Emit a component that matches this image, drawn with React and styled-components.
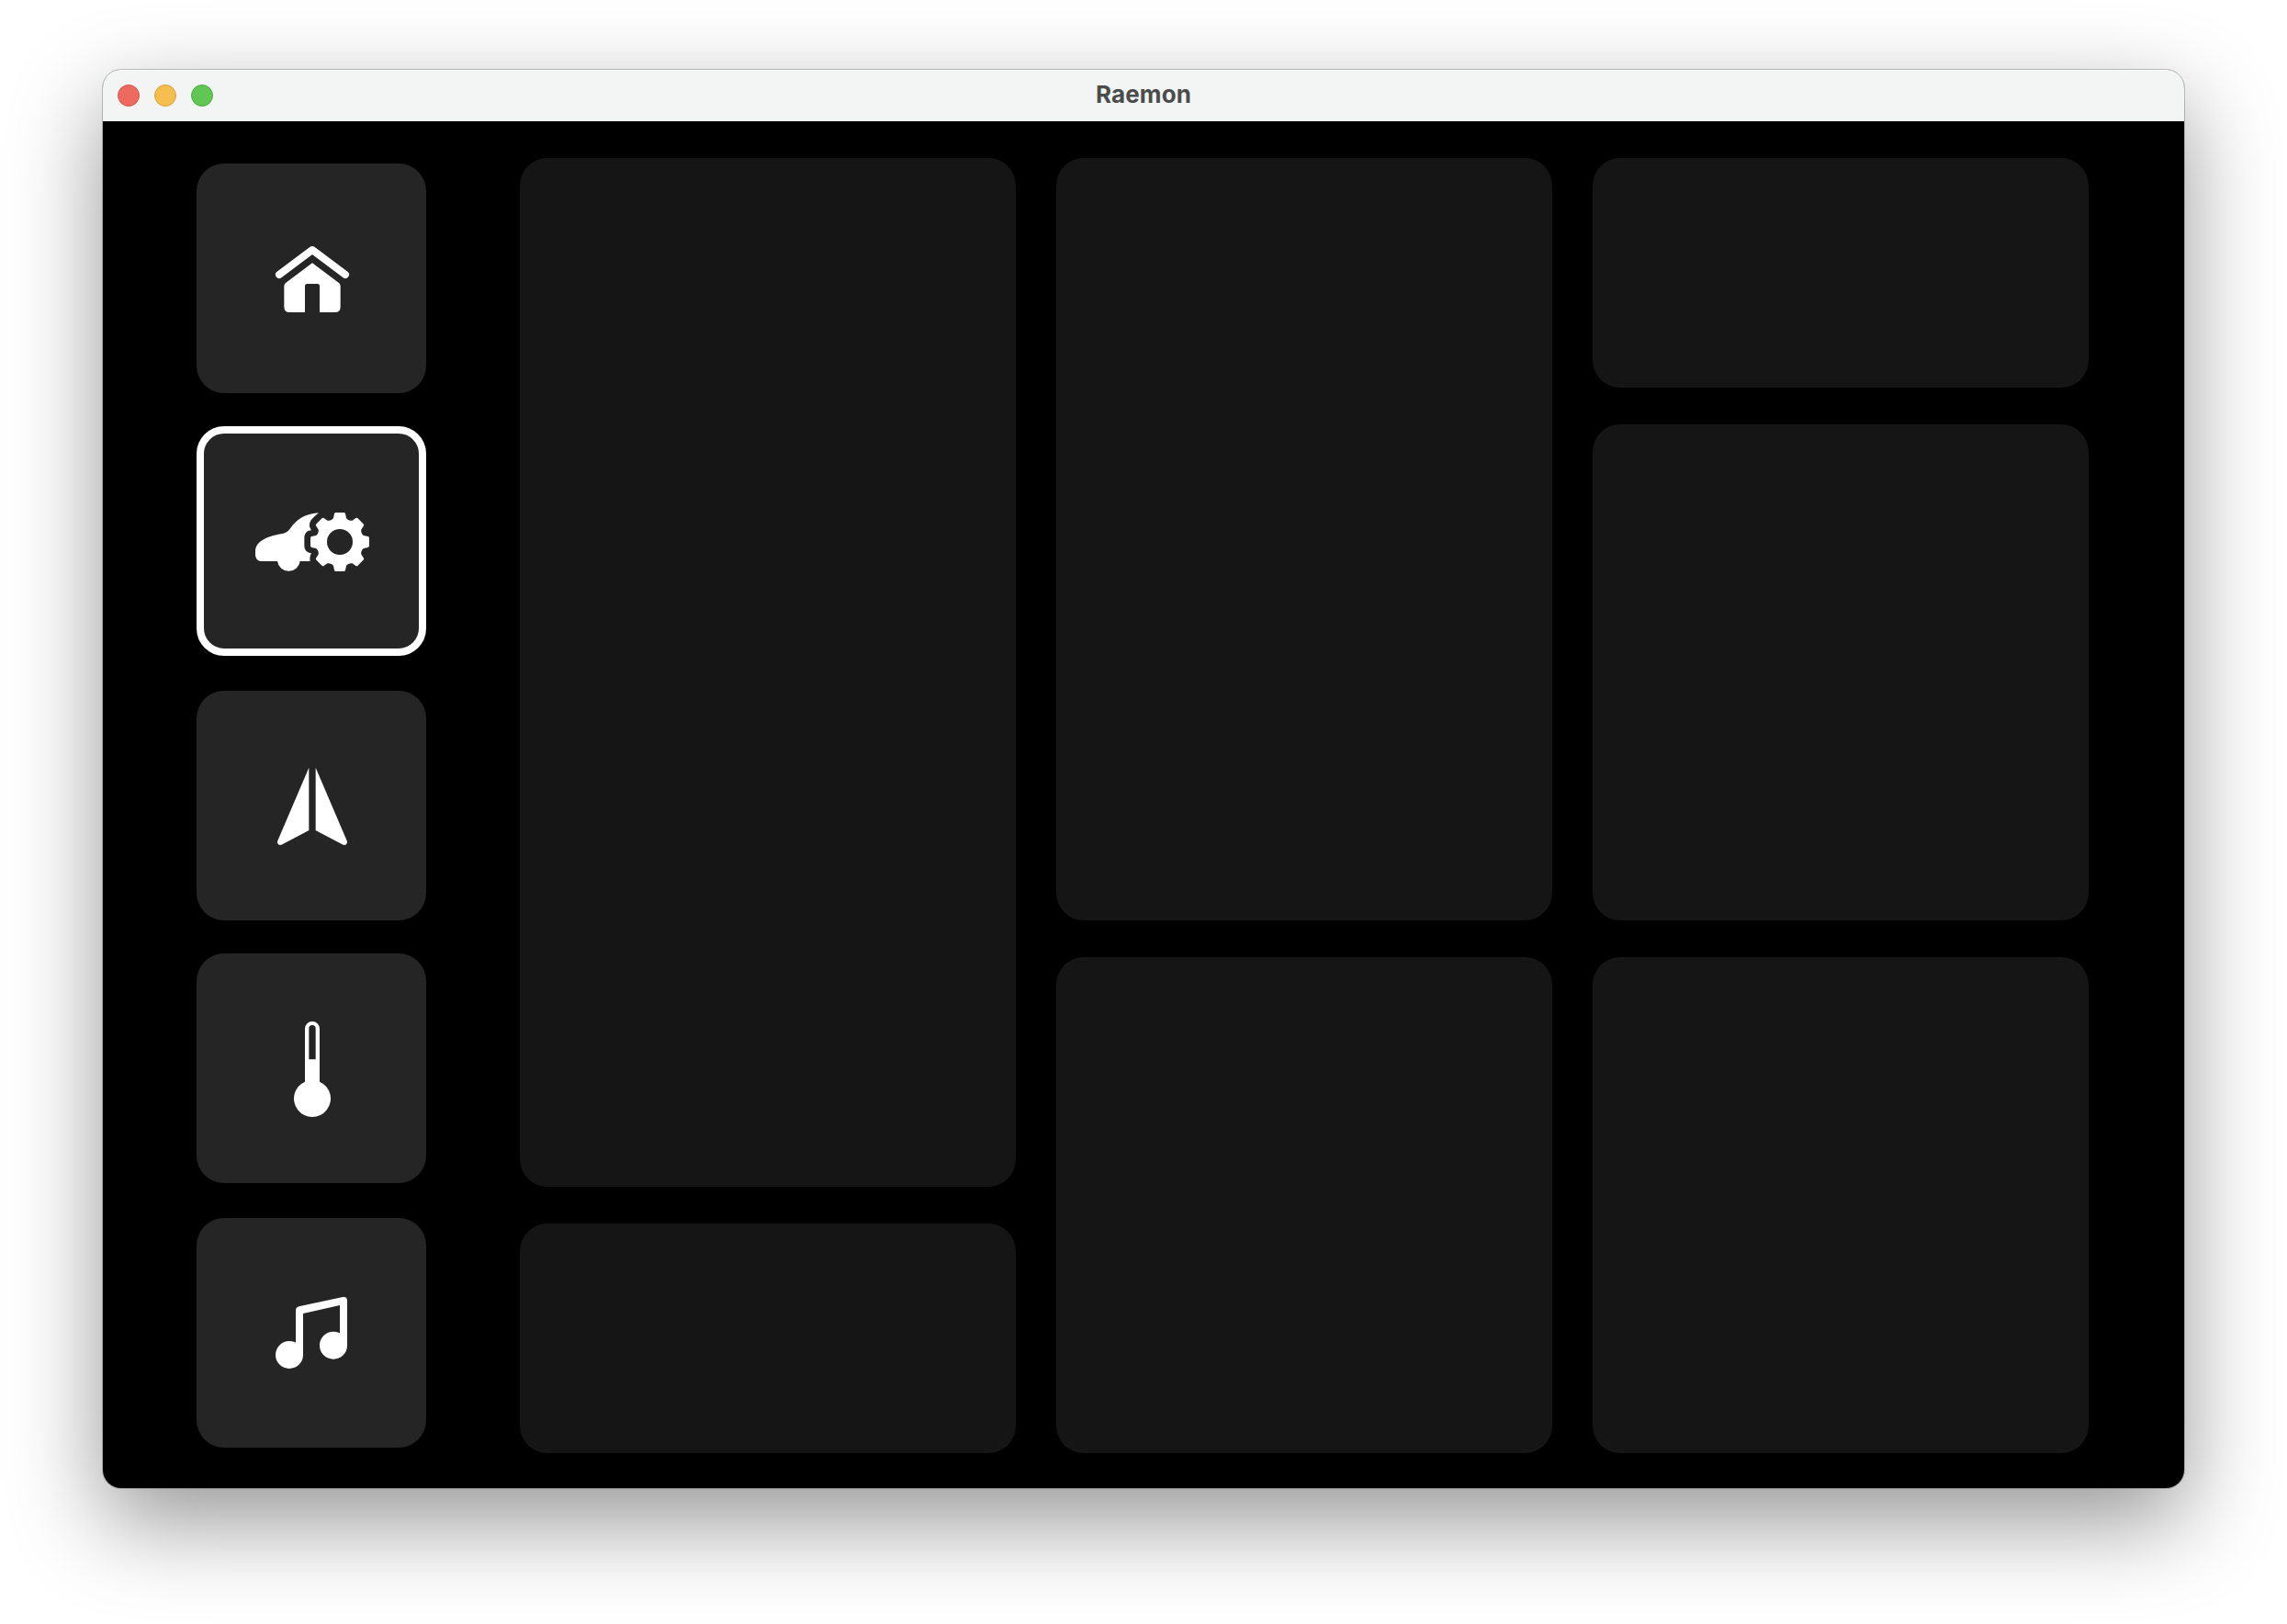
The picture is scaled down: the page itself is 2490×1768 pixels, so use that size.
import React from "react";
import styled, { createGlobalStyle } from "styled-components";

const GlobalStyle = createGlobalStyle`
  * { box-sizing: border-box; }
  body { margin: 0; background: #fff; }
`;

const Desktop = styled.div`
  display: flex;
  width: 2490px;
  height: 1768px;
  padding: 76px 112px 148px;
  background: #fff;
  overflow: hidden;
`;

const Window = styled.div`
  display: flex;
  flex-direction: column;
  flex: 1;
  border-radius: 20px;
  background: #000;
  box-shadow: 0 0 0 1px rgba(0, 0, 0, 0.22), 0 36px 100px rgba(0, 0, 0, 0.42);
`;

const TitleBar = styled.header`
  display: grid;
  grid-template-columns: 1fr auto 1fr;
  align-items: center;
  height: 56px;
  padding: 0 16px;
  border-radius: 20px 20px 0 0;
  background: #f3f5f4;
  box-shadow: inset 0 1px 0 #fbfcfb;
`;

const Controls = styled.div`
  display: flex;
  gap: 16px;
`;

const Control = styled.span`
  width: 24px;
  height: 24px;
  border-radius: 50%;
  background: ${(p) => p.$fill};
  border: 1px solid ${(p) => p.$edge};
`;

const Title = styled.h1`
  margin: 0;
  padding-bottom: 2px;
  font: 700 26px/32px Inter, "Liberation Sans", sans-serif;
  letter-spacing: 0.1px;
  color: #4a4d4b;
`;

const Content = styled.main`
  display: flex;
  flex: 1;
  gap: 102px;
  padding: 40px 104px 38px 102px;
`;

const Sidebar = styled.nav`
  display: grid;
  grid-template-rows: 286px 288px 286px 288px 250px;
  width: 250px;
  padding-top: 6px;
`;

const NavButton = styled.button`
  display: flex;
  align-items: center;
  justify-content: center;
  width: 250px;
  height: 250px;
  padding: 0;
  border: ${(p) => (p.$selected ? "8px solid #fff" : "0")};
  border-radius: 30px;
  background: #252525;
`;

const Icon = styled.svg`
  display: block;
  width: ${(p) => p.$width}px;
  height: 120px;
  fill: #fff;
`;

const Dashboard = styled.section`
  display: flex;
  flex: 1;
  gap: 44px;
`;

const Column = styled.div`
  display: flex;
  flex-direction: column;
  flex: 1;
  gap: 40px;
`;

const Panel = styled.article`
  height: ${(p) => p.$height}px;
  border-radius: 30px;
  background: #151515;
`;

function gearPath(cx, cy) {
  const steps = [
    ["Q", [-23, 73.8], [-21, 78]],
    ["L", [-18, 92]],
    ["Q", [-17, 96], [-13, 96]],
    ["L", [13, 96]],
    ["Q", [17, 96], [18, 92]],
    ["L", [21, 78]],
    ["Q", [23, 73.8], [29.5, 71.1]],
  ];
  const place = ([u, v], a) =>
    `${(cx + u * Math.cos(a) + v * Math.sin(a)).toFixed(2)} ${(cy + u * Math.sin(a) - v * Math.cos(a)).toFixed(2)}`;
  let d = `M${place([-29.5, 71.1], 0)}`;
  for (let i = 0; i < 8; i++) {
    const a = (i * Math.PI) / 4;
    steps.forEach(([cmd, ...pts]) => {
      d += cmd + pts.map((p) => place(p, a)).join(" ");
    });
  }
  return `${d}ZM${cx - 42} ${cy}a42 42 0 1 0 84 0a42 42 0 1 0 -84 0Z`;
}

const HomeIcon = () => (
  <Icon $width={120} viewBox="-3 -21 360 360">
    <path d="M72 147L180 66L288 147" fill="none" stroke="#fff" strokeWidth="24" strokeLinecap="round" strokeLinejoin="round" />
    <path d="M180 109L267 174Q272 178 272 185V252Q272 270 254 270H204V184Q204 177 197 177H163Q156 177 156 184V270H106Q88 270 88 252V185Q88 178 93 174Z" />
  </Icon>
);

const CarSettingsIcon = () => (
  <Icon $width={150} viewBox="0 -33 450 360">
    <path d="M249 55C215 57 187 69 168 91C155 106 150 119 134 122C88 129 42 145 42 181V190C42 205 50 213 61 213H114A37.3 37.3 0 0 0 188 213H221Q218 198 225 187C212 186 202 177 202 162V137C202 122 212 112 225 112Q215 98 221 84C226 75 237 65 249 55Z" />
    <path fillRule="evenodd" d={gearPath(318, 150)} />
  </Icon>
);

const NavigationIcon = () => (
  <Icon $width={120} viewBox="-3 -9 360 360">
    <path d="M169 47V252L82 298Q75 302 69 298Q63 293 67 286Z" />
    <path d="M191 47V252L278 298Q285 302 291 298Q297 293 293 286Z" />
  </Icon>
);

const ThermometerIcon = () => (
  <Icon $width={120} viewBox="-3 9 360 360">
    <path
      fillRule="evenodd"
      d="M156 60A24 24 0 0 1 204 60V233A60 60 0 1 1 156 233ZM169 160H191V59A11 11 0 0 0 169 59Z"
    />
  </Icon>
);

const MusicIcon = () => (
  <Icon $width={120} viewBox="-3 -12 360 360">
    <path d="M126 95Q126 85 136 82L280 51Q294 49 294 63V209H270V78L150 105V240H126Z" />
    <circle cx="105" cy="240" r="45" />
    <circle cx="249" cy="209" r="45" />
  </Icon>
);

const navItems = [
  { id: "home", Glyph: HomeIcon },
  { id: "car", Glyph: CarSettingsIcon, selected: true },
  { id: "navigation", Glyph: NavigationIcon },
  { id: "climate", Glyph: ThermometerIcon },
  { id: "music", Glyph: MusicIcon },
];

const columns = [
  [1120, 250],
  [830, 540],
  [250, 540, 540],
];

export default function App() {
  return (
    <>
      <GlobalStyle />
      <Desktop>
        <Window>
          <TitleBar>
            <Controls>
              <Control $fill="#ed6a5f" $edge="#d9574c" />
              <Control $fill="#f5bf4f" $edge="#d9a13c" />
              <Control $fill="#62c655" $edge="#52a843" />
            </Controls>
            <Title>Raemon</Title>
          </TitleBar>
          <Content>
            <Sidebar>
              {navItems.map(({ id, Glyph, selected }) => (
                <NavButton key={id} $selected={selected}>
                  <Glyph />
                </NavButton>
              ))}
            </Sidebar>
            <Dashboard>
              {columns.map((heights, c) => (
                <Column key={c}>
                  {heights.map((h, r) => (
                    <Panel key={r} $height={h} />
                  ))}
                </Column>
              ))}
            </Dashboard>
          </Content>
        </Window>
      </Desktop>
    </>
  );
}
